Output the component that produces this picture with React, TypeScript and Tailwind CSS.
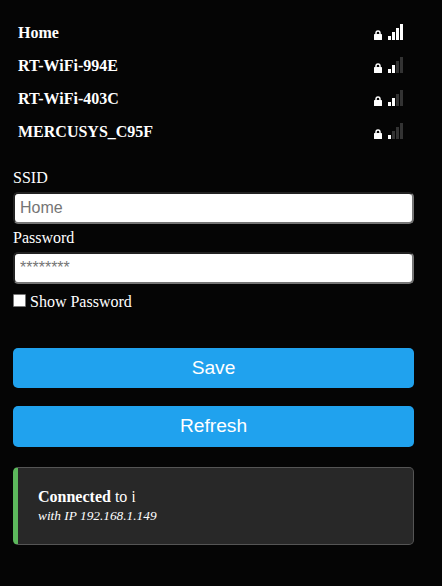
const networks = [
  { name: 'Home', level: 4 },
  { name: 'RT-WiFi-994E', level: 2 },
  { name: 'RT-WiFi-403C', level: 2 },
  { name: 'MERCUSYS_C95F', level: 1 },
];

const barHeights = ['h-1', 'h-2', 'h-3', 'h-4'];

function Lock() {
  return (
    <svg width="8" height="10" viewBox="0 0 8 10" className="mr-1.5 block">
      <path d="M2 5V3.1a2 2.2 0 0 1 4 0V5" fill="none" stroke="#fff" strokeWidth="1.5" />
      <rect x="0" y="4" width="8" height="6" rx="0.6" fill="#fff" />
    </svg>
  );
}

function Signal({ level }: { level: number }) {
  return (
    <div className="flex items-end gap-px">
      {barHeights.map((height, i) => (
        <span key={height} className={`block w-[3px] ${height} ${i < level ? 'bg-white' : 'bg-[#333]'}`} />
      ))}
    </div>
  );
}

function Field({ label, placeholder, type }: { label: string; placeholder: string; type: string }) {
  return (
    <label className="block h-[60px]">
      <span className="block h-[23px] leading-[18px]">{label}</span>
      <input
        type={type}
        placeholder={placeholder}
        className="block h-8 w-full rounded-[5px] border-2 border-t-[#222] border-l-[#222] border-r-[#767676] border-b-[#767676] bg-white px-[5px] py-0 font-['Liberation_Sans',Arial,sans-serif] text-base text-black placeholder:text-[#757575]"
      />
    </label>
  );
}

export default function App() {
  return (
    <main className="h-[586px] w-full bg-[#050505] pt-4 pr-7 pl-[13px] font-['Liberation_Serif','Times_New_Roman',serif] text-base text-white">
      <ul>
        {networks.map((network) => (
          <li key={network.name} className="flex h-[33px] justify-between pt-2 pr-[11px] pl-[5px]">
            <span className="leading-[18px] font-bold">{network.name}</span>
            <div className="flex h-4 items-end">
              <Lock />
              <Signal level={network.level} />
            </div>
          </li>
        ))}
      </ul>
      <form className="pt-[21px]" onSubmit={(event) => event.preventDefault()}>
        <Field label="SSID" placeholder="Home" type="text" />
        <Field label="Password" placeholder="********" type="text" />
        <label className="flex h-[59px] pt-1">
          <input
            type="checkbox"
            className="mt-px mr-1 block size-[13px] appearance-none rounded-[1px] border border-[#767676] bg-white"
          />
          <span className="leading-[18px]">Show Password</span>
        </label>
        <button className="mb-[18px] block h-10 w-full rounded-[5px] bg-[#20a2ee] font-['Liberation_Sans',Arial,sans-serif] text-[19.2px] leading-10">
          Save
        </button>
        <button className="mb-5 block h-[41px] w-full rounded-[5px] bg-[#20a2ee] pb-[2px] font-['Liberation_Sans',Arial,sans-serif] text-[19.2px] leading-[39px]">
          Refresh
        </button>
      </form>
      <section className="h-[78px] rounded-[5px] border border-l-[5px] border-[#555] border-l-[#5cb85c] bg-[#282828] pt-5 pl-5">
        <p className="leading-[18px]">
          <strong>Connected</strong> to{' '}
          <span className="inline-block [clip-path:inset(0_0_0_1px)]">i</span>
        </p>
        <p className="pt-px text-[13.333px] leading-[17px] italic">with IP 192.168.1.149</p>
      </section>
    </main>
  );
}
